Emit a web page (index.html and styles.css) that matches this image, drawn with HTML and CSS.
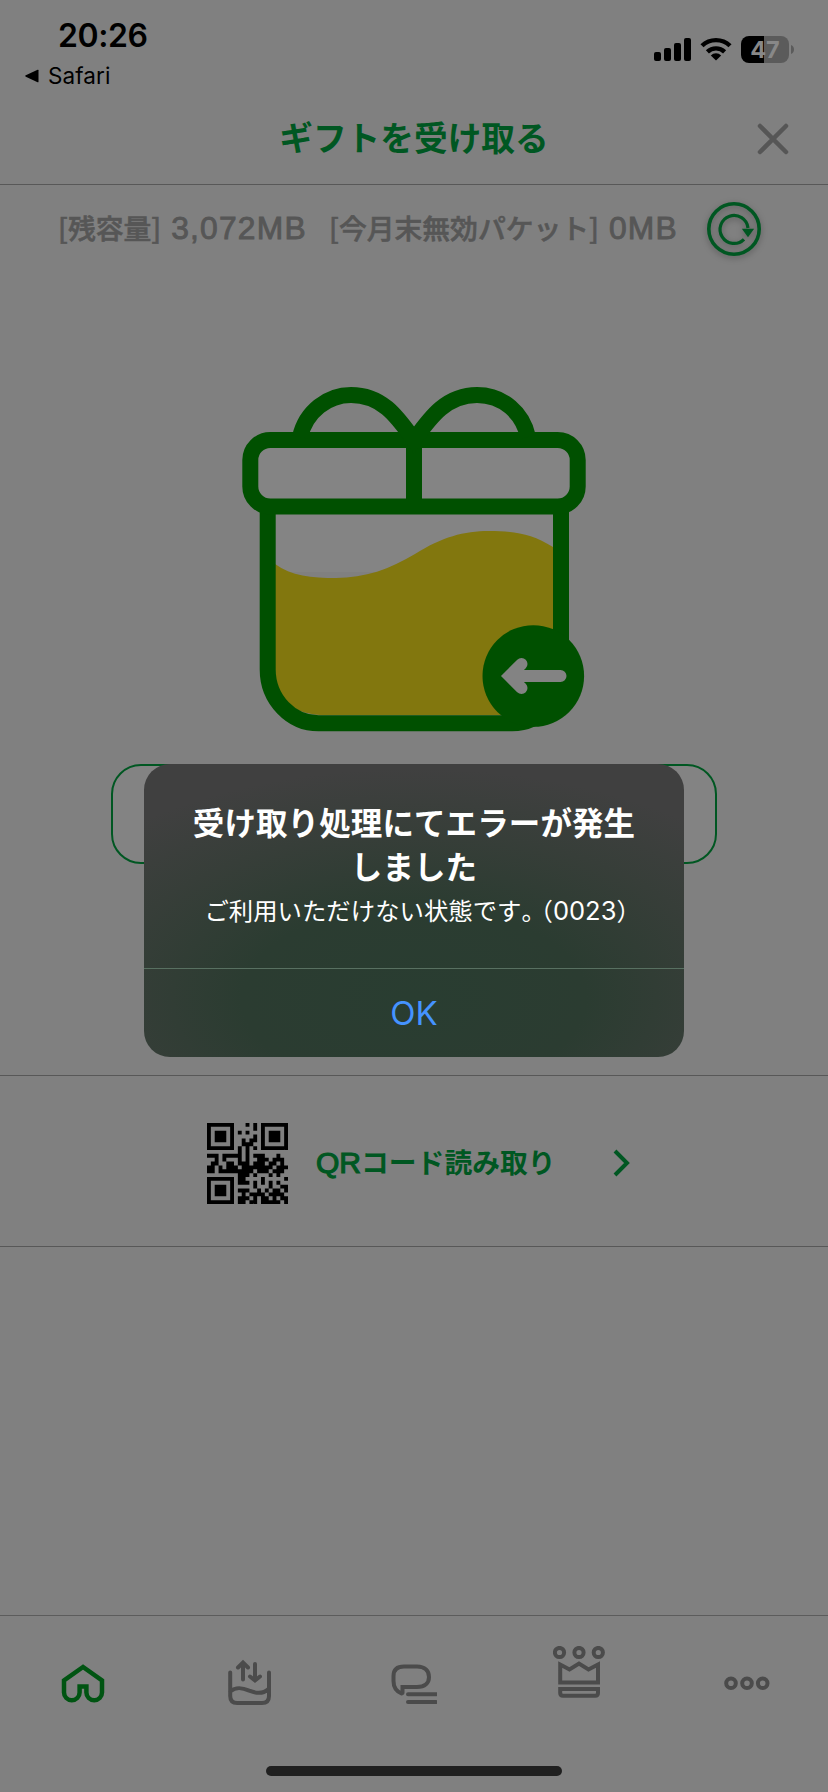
FILE: index.html
```html
<!DOCTYPE html>
<html lang="ja">
<head>
<meta charset="utf-8">
<title>ギフトを受け取る</title>
<link rel="stylesheet" href="styles.css">
</head>
<body>
<div class="screen">
  <div class="status">
    <div class="status-left">
      <div class="clock">20:26</div>
      <div class="back"><svg width="14" height="14" viewBox="0 0 14 14"><path d="M13.5 1.2v11.6q0 .8-.9.4L.8 7.700q-1.200-.7 0-1.400L12.600.8q.9-.4.9.4z"/></svg><span>Safari</span></div>
    </div>
    <div class="status-right">
      <svg width="37" height="24" viewBox="0 0 37 24"><rect y="14" width="7" height="9" rx="2"/><rect x="10" y="10" width="7" height="13" rx="2"/><rect x="20" y="5" width="7" height="18" rx="2"/><rect x="30" y="0" width="7" height="23" rx="2"/></svg>
      <svg class="wifi" width="32" height="24" viewBox="0 0 32 24"><g fill="none" stroke="#000" stroke-width="4.4"><path d="M2 8.8a20 20 0 0 1 28 0"/><path d="M7.4 14.8a12.4 12.4 0 0 1 17.2 0"/></g><path d="M16 23.6l-5.2-5.1a7.4 7.4 0 0 1 10.4 0z"/></svg>
      <div class="battery"><span>47</span></div>
      <svg class="nub" width="3" height="9" viewBox="0 0 3 9"><path d="M0 0q3 1.200 3 4.500T0 9z"/></svg>
    </div>
  </div>
  <header class="header">
    <h1>ギフトを受け取る</h1>
    <svg class="close" width="32" height="32" viewBox="0 0 32 32"><path d="M3 3l26 26M29 3L3 29"/></svg>
  </header>
  <main>
    <div class="balance">
      <span class="remain">[残容量]<b class="amount">3,072MB</b></span>
      <span class="expire">[今月末無効パケット]<b class="amount">0MB</b></span>
      <svg class="reload" width="54" height="54" viewBox="0 0 54 54"><circle cx="27" cy="27" r="25.200" stroke-width="3.600"/><path d="M37 37.300A14 14 0 1 1 41 26" stroke-width="3.200"/><path d="M36.300 27.500h9.400L41 34z" fill="#005722" stroke-width="1.500"/></svg>
    </div>
    <svg class="gift" width="344" height="345" viewBox="0 0 344 345">
      <path fill="#848484" d="M33 125h278v60H33zM10 55h324v62H10z"/>
      <path fill="#82770e" d="M33 177C49 189 70 191 94 191C123 191 148 182 173 167C200 150 222 144 247 144C273 144 290 147 311 160V328H78Q33 325 33 280z"/>
      <g fill="none" stroke="#005000" stroke-width="16">
        <path d="M25.700 118V282A51 54 0 0 0 78 336.300H270A50 50 0 0 0 319 282V118"/>
        <rect x="8.300" y="53" width="327.400" height="66.500" rx="20"/>
        <path d="M172 48v75"/>
        <path d="M58 50C64 24 86 8 109 8C141 8 156 31 172 53C188 31 204 8 235 8C261 8 281 26 286 50"/>
      </g>
      <circle cx="291.300" cy="289" r="50.800" fill="#005000"/>
      <path d="M318.500 289h-50m11-12l-12 12l12 12" fill="none" stroke="#838383" stroke-width="12" stroke-linecap="round"/>
      <path d="M259.500 289l16-16v32z" fill="#838383"/>
    </svg>
    <div class="receive-button"></div>
    <div class="qr-row">
      <svg id="qr" width="81" height="81" viewBox="0 0 21 21"></svg>
      <span><b class="latin">QR</b>コード読み取り</span>
      <svg class="chevron" width="20" height="28" viewBox="0 0 20 28"><path d="M3 2l12 12L3 26"/></svg>
    </div>
  </main>
  <nav class="tabs">
    <svg class="home" width="44" height="54" viewBox="0 0 44 54"><path d="M22 8L3 21.500V33.500a7.800 7.800 0 0 0 15.600 0V27.500h6.800V33.500a7.800 7.800 0 0 0 15.600 0V21.500z"/></svg>
    <svg class="data" width="44" height="54" viewBox="0 0 44 54"><path d="M2.200 13.500V37q0 7 7 7H34q7 0 7-7V13.500M2.200 32.500c6-5 12-3.800 19-.8c7 2.800 14 3.200 19-1.500M15 20.500V4M10 8.500L15 3.500L20 8.500M27 5v16M22 17.500L27 21.500L32 17.500"/></svg>
    <svg class="talk" width="46" height="54" viewBox="0 0 46 54"><path d="M10.500 34.500C4.500 32 2.500 27 2.500 22V17Q2.500 7.500 13 7.500H26C34 7.500 38 12 38 18C38 24 34 28 26 28H11.500V34M17 35.200H45M17 43H45"/></svg>
    <svg class="crown" width="52" height="54" viewBox="0 0 52 54"><circle cx="6.500" cy="6.500" r="4.600"/><circle cx="26" cy="6.500" r="4.600"/><circle cx="45.300" cy="6.500" r="4.600"/><path d="M7.200 18.500V36.500H45V18.500L35.500 23.500L26 17.500L16.500 23.500zM7.200 43H45V47q0 2.800-2.800 2.800H10q-2.800 0-2.800-2.800z"/></svg>
    <svg width="46" height="54" viewBox="0 0 46 54"><circle cx="7" cy="24.300" r="4.800"/><circle cx="23" cy="24.300" r="4.800"/><circle cx="38.700" cy="24.300" r="4.800"/></svg>
  </nav>
  <div class="home-bar"></div>
  <section class="alert">
    <div class="alert-body">
      <h2>受け取り処理にてエラーが発生<br>しました</h2>
      <p>ご利用いただけない状態です<span class="half stop">。</span><span class="half">（</span><span class="num">0023</span><span class="half close-paren">）</span></p>
    </div>
    <button>OK</button>
  </section>
</div>
<script src="qr.js"></script>
</body>
</html>
```
FILE: styles.css
```css
* { box-sizing: border-box; }
body { margin: 0; background: #808080; font-family: Inter, "Noto Sans CJK JP", sans-serif; }
svg { display: block; flex: none; }
h1, h2, p { margin: 0; }
.screen { position: relative; width: 828px; height: 1792px; overflow: hidden; display: flex; flex-direction: column; background: #808080; }
.status { height: 96px; flex: none; display: flex; justify-content: space-between; padding: 17px 34px 0 25px; }
.clock { margin-left: 33px; font-size: 32px; line-height: 38px; font-weight: 600; letter-spacing: -.4px; }
.back { display: flex; align-items: center; gap: 9px; font-size: 22.500px; line-height: 30px; margin-top: 6px; letter-spacing: .1px; }
.status-right { display: flex; align-items: flex-start; padding-top: 21px; }
.wifi { margin-left: 9px; margin-top: -1px; }
.battery { width: 48px; height: 27px; margin: -2px 2px 0 9px; border-radius: 8px; background: linear-gradient(90deg, #000 48%, #5b5b5b 48%); color: #888; font-size: 23.500px; font-weight: 700; line-height: 27px; text-align: center; }
.nub { fill: #5b5b5b; margin-top: 7px; }
.header { height: 89px; flex: none; border-bottom: 1px solid #585858; display: flex; justify-content: flex-end; align-items: center; padding: 0 39px 3px 0; }
.header h1 { flex: 1; margin: -3px 0 0 71px; text-align: center; color: #005722; font: 700 33.700px/44px "Noto Sans CJK JP", sans-serif; }
.close { stroke: #565656; stroke-width: 4.500; stroke-linecap: round; }
main { height: 1430px; flex: none; display: flex; flex-direction: column; align-items: center; }
.balance { width: 828px; height: 88px; display: flex; align-items: center; padding: 0 66px 0 58px; color: #565656; font: 500 27.800px/40px "Noto Sans CJK JP", sans-serif; -webkit-text-stroke: .6px #565656; white-space: nowrap; }
.balance span { margin-top: -4px; }
.remain { width: 271px; }
.expire { width: 378px; }
.amount { margin-left: 10px; font-family: "Liberation Sans", Arial, sans-serif; font-weight: 400; -webkit-text-stroke: .9px #565656; font-size: 31.800px; letter-spacing: 1.200px; }
.reload { fill: none; stroke: #005722; filter: drop-shadow(0 2px 3px rgba(0,0,0,.3)); }
.gift { margin-top: 114px; }
.receive-button { width: 606px; height: 100px; margin-top: 32px; border: 2px solid #005722; border-radius: 30px; background: #838383; flex: none; }
.qr-row { width: 828px; height: 172px; margin-top: 211px; border-top: 1px solid #585858; border-bottom: 1px solid #585858; display: flex; align-items: center; padding: 4px 0 0 207px; color: #005722; font: 700 27.800px/40px "Noto Sans CJK JP", sans-serif; flex: none; }
.qr-row span { width: 296px; margin: -3px 0 0 28px; white-space: nowrap; }
.latin { font: 400 30px/40px "Liberation Sans", Arial, sans-serif; -webkit-text-stroke: 1.200px #005722; }
.chevron { fill: none; stroke: #005722; stroke-width: 4; }
.tabs { height: 145px; flex: none; border-top: 1px solid #5c5c5c; display: flex; padding: 43px 58px 0 61px; justify-content: space-between; fill: none; }
.tabs svg { stroke: #4b4b4b; stroke-width: 4; stroke-linecap: round; }
.tabs .home { stroke: #005412; stroke-width: 4.500; }
.tabs .data { margin: 0 -4px 0 4px; }
.tabs .talk { margin: 0 -3px 0 3px; }
.tabs .crown { margin-top: -13px; stroke-linecap: butt; }
.home-bar { width: 296px; height: 10px; margin: 6px auto 0; border-radius: 5px; background: #202020; }
.alert { position: absolute; left: 144px; top: 764px; width: 540px; height: 293px; border-radius: 26px; overflow: hidden; color: #fff; text-align: center; background: radial-gradient(ellipse 430px 230px at 50% 80%, #293d31 0%, #2b3c31 40%, rgba(50,61,53,.7) 70%, rgba(61,61,61,0) 100%), #404040; }
.alert-body { height: 205px; border-bottom: 1px solid #587061; padding-top: 36px; }
.alert h2 { font: 700 31.500px/43.500px "Noto Sans CJK JP", sans-serif; letter-spacing: .1px; white-space: nowrap; }
.alert p { font: 400 24.400px/36px "Noto Sans CJK JP", sans-serif; margin-top: 5px; white-space: nowrap; }
.half { font-feature-settings: "halt"; }
.stop { margin-right: 7px; }
.close-paren { margin-right: -5px; }
.num { font-family: Inter, sans-serif; font-size: 25.500px; }
.alert button { width: 540px; height: 88px; padding: 0; border: 0; background: none; color: #4593ff; font: 400 33px/88px Inter, sans-serif; }
```
FILE: qr.js
```js
const rows = [
  "111111100010101111111",
  "100000100000101000001",
  "101110101010001011101",
  "101110100000101011101",
  "101110100101101011101",
  "100000100111001000001",
  "111111101010101111111",
  "000000001010000000000",
  "111011111010111000100",
  "001010001010011101110",
  "011001101110111011010",
  "110101110111111110111",
  "110111111111011101110",
  "000000001110100010100",
  "111111101100001000001",
  "100000101110101010100",
  "101110100000100010011",
  "101110101110010101101",
  "101110100101111011110",
  "100000101110101101011",
  "111111101101101111101"
];
let path = "";
rows.forEach((row, y) => [...row].forEach((cell, x) => {
  if (cell === "1") path += `M${x} ${y}h1v1h-1z`;
}));
document.getElementById("qr").innerHTML = `<path d="${path}"/>`;
```
